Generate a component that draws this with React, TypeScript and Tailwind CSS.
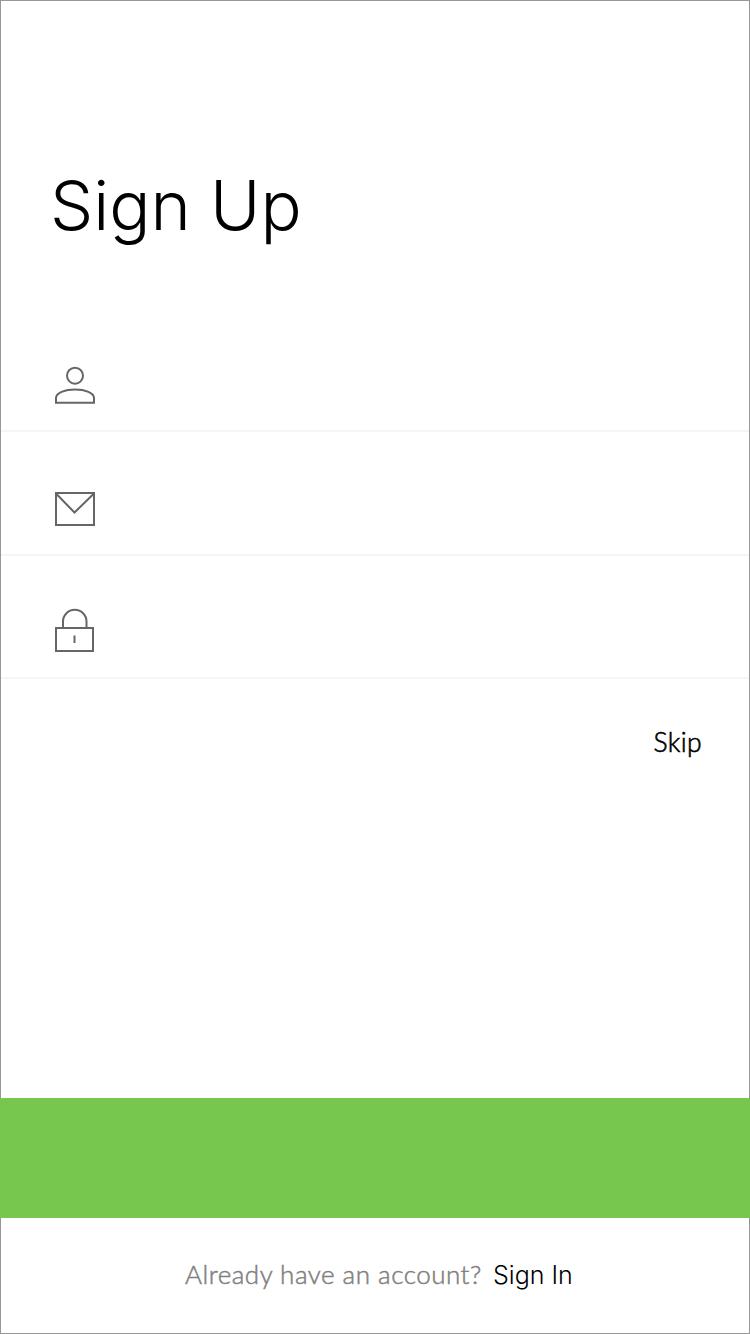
import type { ReactNode } from "react";

function UserIcon() {
  return (
    <svg width="60" height="50" viewBox="0 0 60 50" fill="none" stroke="#666" strokeWidth="2" aria-hidden="true">
      <circle cx="30" cy="15.7" r="8" />
      <path d="M11 42.7V38C11 33 19.5 29.5 30 29.5S49 33 49 38V42.7Z" />
    </svg>
  );
}

function MailIcon() {
  return (
    <svg width="60" height="50" viewBox="0 0 60 50" fill="none" stroke="#666" strokeWidth="2" aria-hidden="true">
      <path d="M11 8H49V40H11Z" />
      <path d="M10.5 8L29.5 27.5L49 8.5" />
    </svg>
  );
}

function LockIcon() {
  return (
    <svg width="60" height="56" viewBox="0 0 60 56" fill="none" stroke="#666" strokeWidth="2" aria-hidden="true">
      <path d="M11 26H48V49H11Z" />
      <path d="M18 25V19.5A11.6 11.6 0 0 1 41.5 19.5V25" />
      <path d="M29.5 33.5V41" />
    </svg>
  );
}

function Field({ icon, label, className }: { icon: ReactNode; label: string; className: string }) {
  return (
    <label className={`flex items-start border-b-2 border-[#f5f5f5] pl-[44px] ${className}`}>
      {icon}
      <input aria-label={label} className="h-[50px] min-w-0 flex-1 bg-transparent text-[26px] outline-none" />
    </label>
  );
}

export default function App() {
  return (
    <div className="flex h-[1334px] w-[750px] flex-col bg-white font-['Lato',sans-serif] text-black">
      <main className="flex h-[1098px] flex-col border-x border-t border-[#979797] pt-[165px]">
        <h1 className="pl-[49px] font-['Inter',sans-serif] text-[68.5px] leading-[80px] font-light whitespace-nowrap">Sign Up</h1>
        <form className="mt-[85px] flex flex-col">
          <Field icon={<UserIcon />} label="Name" className="h-[101px] pt-[29px]" />
          <Field icon={<MailIcon />} label="Email" className="h-[124px] pt-[53px]" />
          <Field icon={<LockIcon />} label="Password" className="h-[123px] pt-[46px]" />
        </form>
        <a className="mt-[47px] mr-[47px] self-end text-[26.5px] leading-[32px] font-light tracking-[0.4px] [-webkit-text-stroke:0.6px_#000]">Skip</a>
      </main>
      <button aria-label="Create account" className="h-[120px] w-full bg-[#77c74f]" />
      <footer className="flex h-[116px] items-start border-x border-b border-[#979797] pt-[40px] pl-[184px] text-[26px] leading-[32px] whitespace-nowrap">
        <span className="w-[308px] font-light tracking-[0.5px] text-[#808080] [-webkit-text-stroke:0.5px_#808080]">Already have an account?</span>
        <a className="pt-px font-['Inter',sans-serif] text-[25px] font-light">Sign In</a>
      </footer>
    </div>
  );
}
